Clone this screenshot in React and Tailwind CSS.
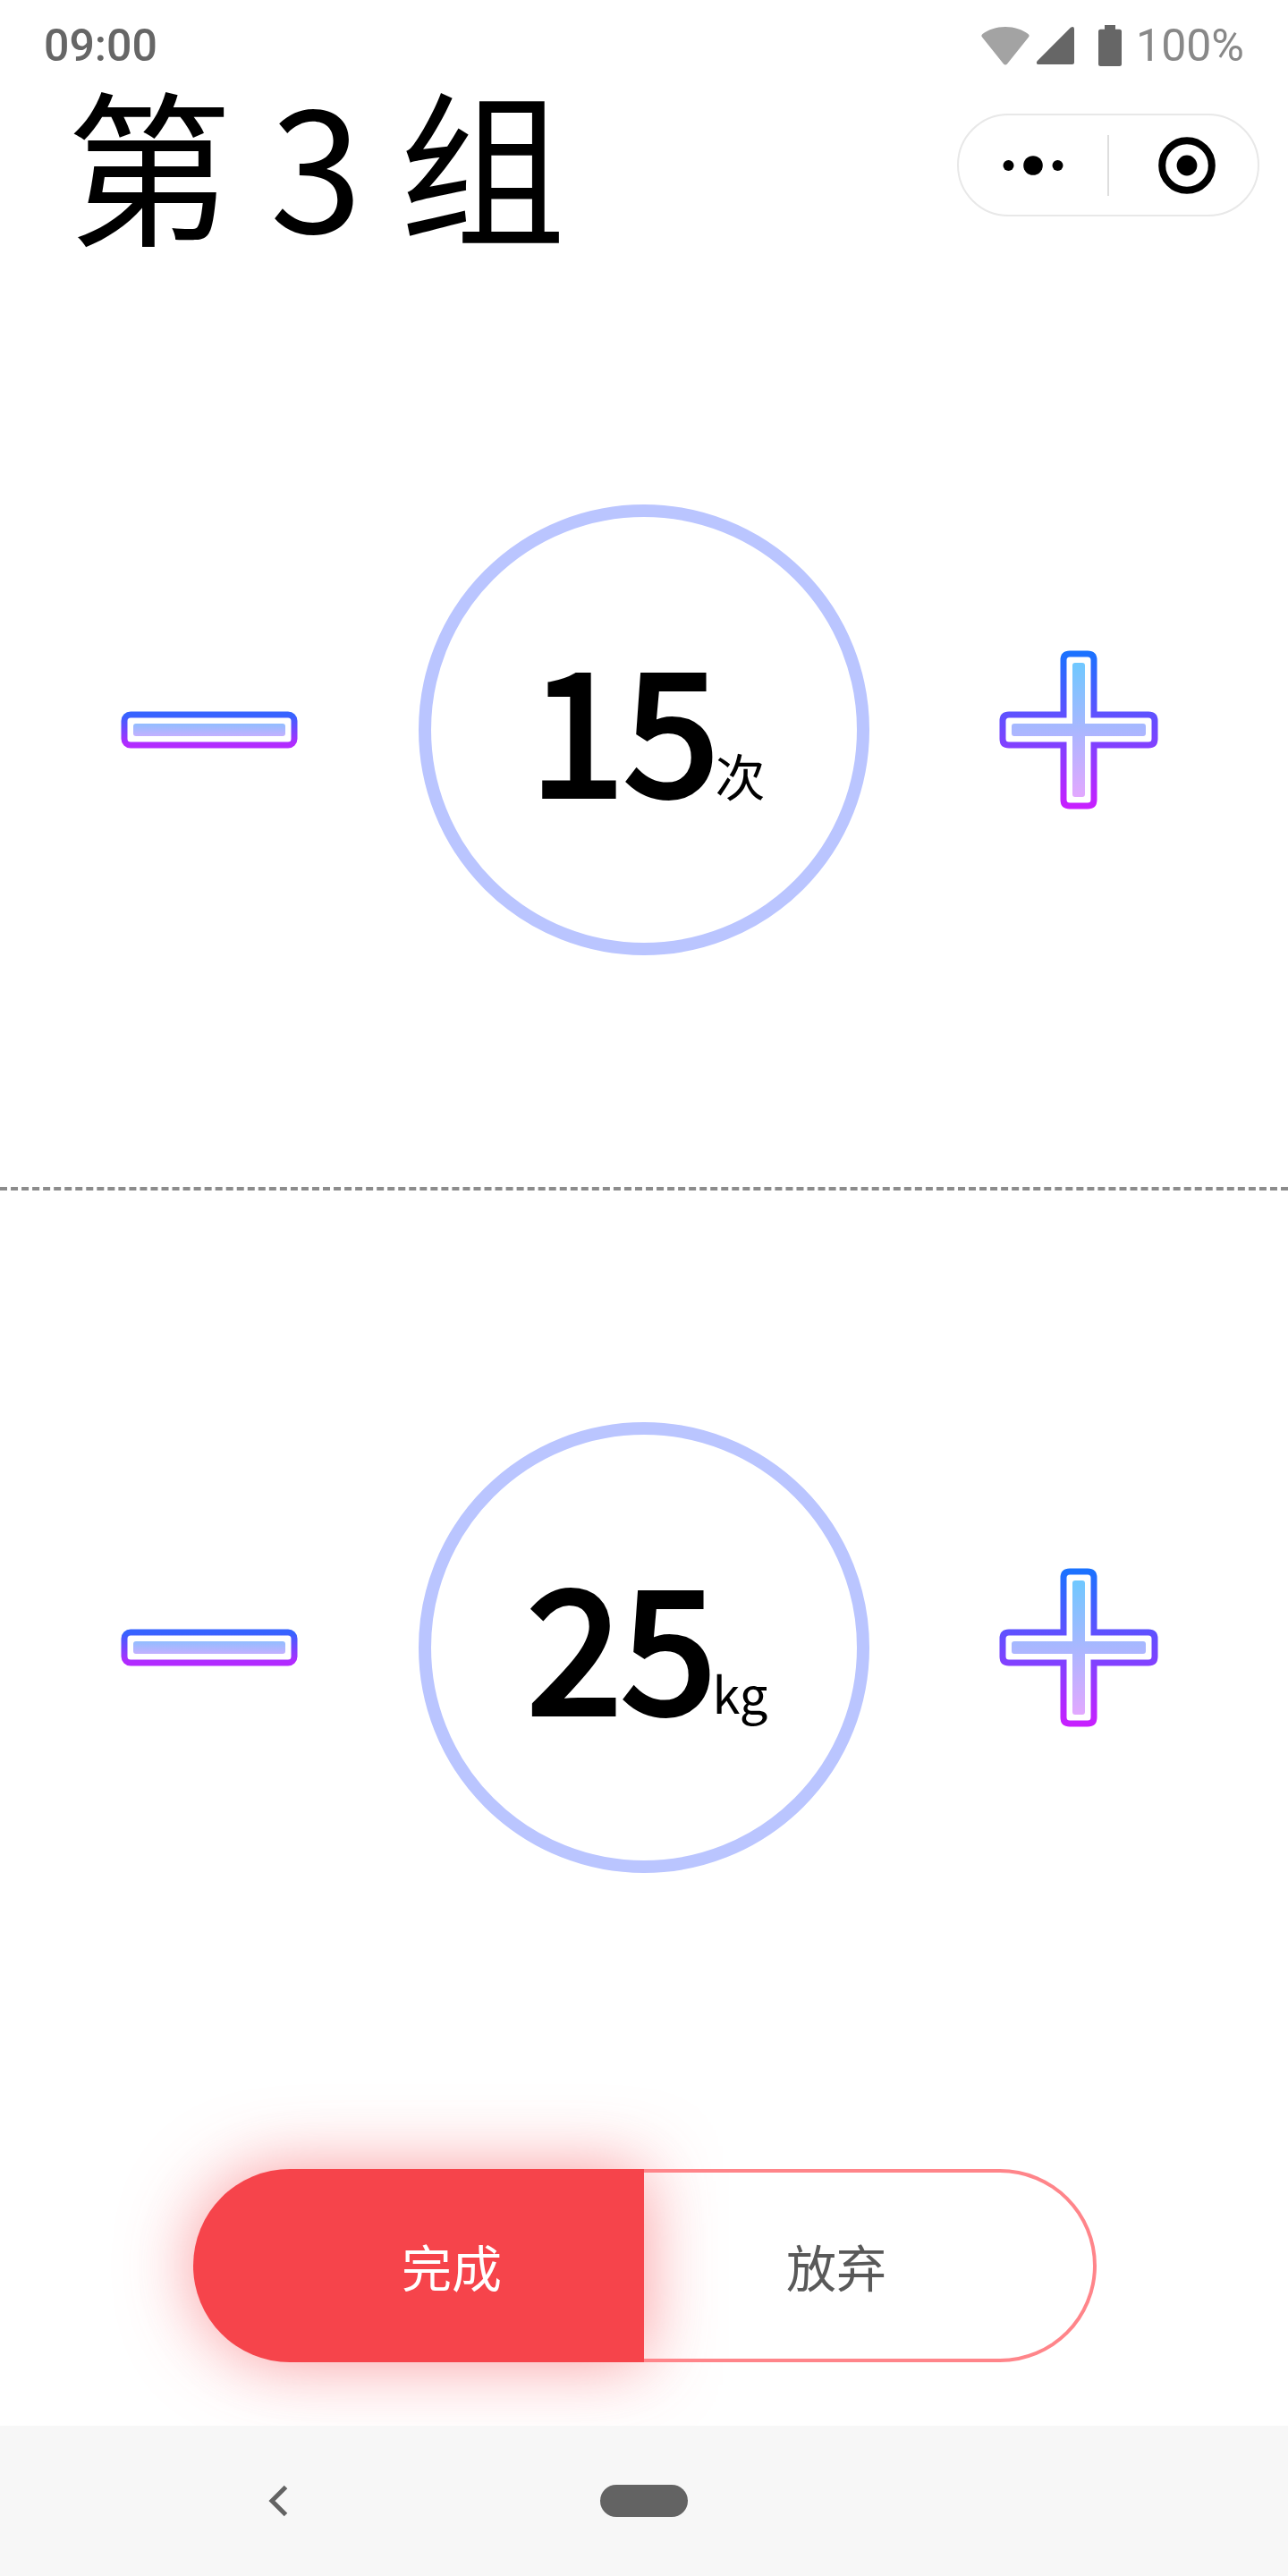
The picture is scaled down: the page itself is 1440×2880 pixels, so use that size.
import { useState } from "react";

function WifiIcon() {
  return (
    <svg width="54" height="43" viewBox="0 0 54 43" aria-hidden="true">
      <path
        d="M27 0C37 0 46 3 52.500 8Q54.500 9.500 53 11.500L29 41.500Q27 43.500 25 41.500L1 11.500Q-.5 9.500 1.500 8C8 3 17 0 27 0Z"
        fill="#a3a3a3"
      />
    </svg>
  );
}

function SignalIcon() {
  return (
    <svg width="42" height="42" viewBox="0 0 42 42" aria-hidden="true">
      <path d="M38 .8Q42-1.500 42 3V39.500Q42 42 39.500 42H2Q-1.500 41.500 .8 38Z" fill="#666" />
    </svg>
  );
}

function BatteryIcon() {
  return (
    <svg width="26" height="46" viewBox="0 0 26 46" aria-hidden="true">
      <path
        d="M7 0H19V4.700H23.500Q26 4.700 26 7.200V43.500Q26 46 23.500 46H2.500Q0 46 0 43.500V7.200Q0 4.700 2.500 4.700H7Z"
        fill="#666"
      />
    </svg>
  );
}

function MinusIcon() {
  return (
    <svg width="198" height="42" viewBox="0 0 198 42" aria-hidden="true">
      <defs>
        <linearGradient id="minusLine" gradientUnits="userSpaceOnUse" x1="0" y1="2" x2="0" y2="40">
          <stop offset="0.08" stopColor="#3763ff" />
          <stop offset="0.92" stopColor="#b22aff" />
        </linearGradient>
        <linearGradient id="minusFill" gradientUnits="userSpaceOnUse" x1="0" y1="14" x2="0" y2="28">
          <stop offset="0" stopColor="#91bdff" />
          <stop offset="1" stopColor="#c3b0ff" />
        </linearGradient>
      </defs>
      <rect x="4" y="4" width="190" height="34" rx="7" fill="none" stroke="url(#minusLine)" strokeWidth="7" />
      <rect x="14" y="14" width="170" height="14" rx="3" fill="url(#minusFill)" />
    </svg>
  );
}

function PlusIcon() {
  return (
    <svg width="178" height="178" viewBox="0 0 178 178" aria-hidden="true">
      <defs>
        <linearGradient id="plusLine" gradientUnits="userSpaceOnUse" x1="0" y1="2" x2="0" y2="176">
          <stop offset="0" stopColor="#1a72ff" />
          <stop offset="0.5" stopColor="#7049ff" />
          <stop offset="1" stopColor="#c81fff" />
        </linearGradient>
        <linearGradient id="plusFill" gradientUnits="userSpaceOnUse" x1="0" y1="14" x2="0" y2="164">
          <stop offset="0" stopColor="#6fc8ff" />
          <stop offset="0.5" stopColor="#a9b7ff" />
          <stop offset="1" stopColor="#e2a8ff" />
        </linearGradient>
      </defs>
      <path
        d="M79 4H99Q106 4 106 11V72H167Q174 72 174 79V99Q174 106 167 106H106V167Q106 174 99 174H79Q72 174 72 167V106H11Q4 106 4 99V79Q4 72 11 72H72V11Q72 4 79 4Z"
        fill="none"
        stroke="url(#plusLine)"
        strokeWidth="7"
      />
      <path
        d="M85 14H93Q96 14 96 17V82H161Q164 82 164 85V93Q164 96 161 96H96V161Q96 164 93 164H85Q82 164 82 161V96H17Q14 96 14 93V85Q14 82 17 82H82V17Q82 14 85 14Z"
        fill="url(#plusFill)"
      />
    </svg>
  );
}

function Stepper({ label, unit, initial, step }) {
  const [value, setValue] = useState(initial);
  return (
    <section className="flex items-center py-[259px]" aria-label={label}>
      <div className="flex flex-1 justify-center">
        <button type="button" aria-label={`减少${label}`} onClick={() => setValue(Math.max(0, value - step))}>
          <MinusIcon />
        </button>
      </div>
      <div className="flex size-[504px] items-center justify-center rounded-full border-[14px] border-[#bac5ff]">
        <p className="flex items-baseline pb-4 pl-2 leading-none whitespace-nowrap">
          <span className="text-[190px] [-webkit-text-stroke:6px_black]">{value}</span>
          <span className="-ml-1 text-[56px]">{unit}</span>
        </p>
      </div>
      <div className="flex flex-1 justify-center">
        <button type="button" aria-label={`增加${label}`} onClick={() => setValue(value + step)}>
          <PlusIcon />
        </button>
      </div>
    </section>
  );
}

export default function App() {
  return (
    <div className="flex min-h-screen flex-col bg-white font-['Noto_Sans_CJK_SC',sans-serif] text-black">
      <div className="flex h-[100px] items-center justify-between px-[49px] pt-[2px] font-['Roboto',sans-serif] text-[50px] leading-none">
        <span className="font-medium text-[#666]">09:00</span>
        <div className="flex items-center">
          <WifiIcon />
          <span className="ml-2">
            <SignalIcon />
          </span>
          <span className="mr-4 ml-[27px]">
            <BatteryIcon />
          </span>
          <span className="text-[#888]">100%</span>
        </div>
      </div>

      <header className="flex h-[205px] items-start justify-between pr-8 pl-[74px]">
        <h1 className="text-[186px] leading-[160px] whitespace-nowrap">第 3 组</h1>
        <div className="mt-[27px] flex h-[115px] w-[338px] items-center rounded-full border-2 border-[#e8e8e8]">
          <button type="button" aria-label="更多" className="flex h-full flex-1 items-center justify-center">
            <svg width="68" height="22" viewBox="0 0 68 22" aria-hidden="true">
              <circle cx="6.500" cy="11" r="6" />
              <circle cx="34" cy="11" r="10.800" />
              <circle cx="61.500" cy="11" r="6" />
            </svg>
          </button>
          <span className="h-[68px] w-[2px] bg-[#dedede]" />
          <button type="button" aria-label="关闭" className="flex h-full w-[166px] items-center justify-center pl-2">
            <svg width="64" height="64" viewBox="0 0 64 64" aria-hidden="true">
              <circle cx="32" cy="32" r="27.800" fill="none" stroke="#000" strokeWidth="8" />
              <circle cx="32" cy="32" r="11.400" />
            </svg>
          </button>
        </div>
      </header>

      <main className="flex-1">
        <Stepper label="次数" unit="次" initial={15} step={1} />
        <hr className="border-0 border-t-4 border-dashed border-[#8c8c8c]" />
        <Stepper label="重量" unit="kg" initial={25} step={1} />
        <div className="flex justify-center pt-[72px] pr-[214px] pb-[71px] pl-[216px] text-[56px]">
          <button
            type="button"
            className="h-[216px] flex-1 rounded-l-full bg-[#f6444b] pl-[74px] text-white shadow-[0_0_80px_rgba(246,68,75,0.55)]"
          >
            完成
          </button>
          <button
            type="button"
            className="relative h-[216px] flex-1 rounded-r-full border-4 border-l-0 border-[#ff858a] pr-[72px] text-[#595959]"
          >
            放弃
          </button>
        </div>
      </main>

      <nav className="relative grid h-[168px] grid-cols-[1fr_auto_1fr] items-center bg-[#f7f7f7]">
        <button type="button" aria-label="返回" className="ml-[300px] justify-self-start">
          <svg width="22" height="36" viewBox="0 0 22 36" aria-hidden="true">
            <path d="M19.500 2.500L4 18L19.500 33.500" fill="none" stroke="#636363" strokeWidth="5" />
          </svg>
        </button>
        <button type="button" aria-label="主屏幕" className="h-9 w-[98px] rounded-full bg-[#636363]" />
      </nav>
    </div>
  );
}
